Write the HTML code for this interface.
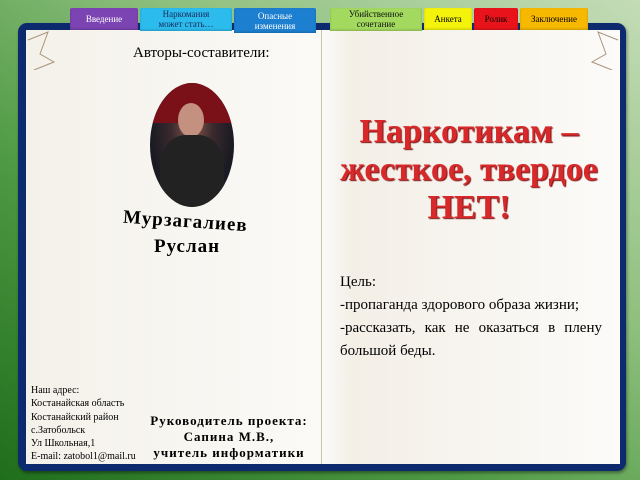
<!DOCTYPE html>
<html><head><meta charset="utf-8"><style>
body{margin:0;width:640px;height:480px;overflow:hidden;position:relative;font-family:"Liberation Serif",serif;
background:linear-gradient(35deg,#1f6e1c 0%,#4f9a44 35%,#8fc07f 65%,#c4dcb7 100%);}
.frame{position:absolute;left:18px;top:23px;width:608px;height:448px;background:#0e2a6e;border-radius:9px;box-shadow:1px 2px 3px rgba(0,0,0,.4)}
.page{position:absolute;left:26px;top:30px;width:594px;height:434px;background:linear-gradient(90deg,#f4f1ea,#fbfaf7 50%,#f3efe7 55%,#fcfbf9);}
.div{position:absolute;left:321px;top:30px;width:1px;height:434px;background:#cdbfae}
.tab{position:absolute;top:8px;height:22px;font-size:9px;text-align:center;line-height:10px;border-radius:2px 2px 0 0;overflow:hidden;box-shadow:inset 0 -1px 2px rgba(0,0,0,.2)}
.t{position:absolute;color:#000}
.bold{font-family:"Liberation Serif",serif;font-weight:bold}
</style></head><body>
<div class="frame"></div>
<div class="page"></div>
<div class="div"></div>
<div class="tab" style="left:70px;width:68px;background:#7b44b2;color:#fff;line-height:22px">Введение</div>
<div class="tab" style="left:140px;width:92px;background:#2bbbec;color:#1a2a5a;padding-top:1px">Наркомания<br>может стать…</div>
<div class="tab" style="left:234px;width:82px;background:#1d7fd0;color:#fff;padding-top:3px">Опасные<br>изменения</div>
<div class="tab" style="left:330px;width:92px;background:#a2d95e;color:#111;padding-top:1px">Убийственное<br>сочетание</div>
<div class="tab" style="left:424px;width:48px;background:#f3f30c;line-height:22px">Анкета</div>
<div class="tab" style="left:474px;width:44px;background:#e9141b;line-height:22px">Ролик</div>
<div class="tab" style="left:520px;width:68px;background:#f6b900;line-height:22px">Заключение</div>
<svg style="position:absolute;left:26px;top:30px" width="40" height="40"><path d="M2 10 L22 2 L14 24 L28 32 L8 40" fill="none" stroke="#a89478" stroke-width="1"/></svg>
<svg style="position:absolute;left:580px;top:30px" width="40" height="40"><path d="M38 10 L18 2 L26 24 L12 32 L32 40" fill="none" stroke="#a89478" stroke-width="1"/></svg>
<div class="t" style="left:133px;top:45px;font-size:15px">Авторы-составители:</div>
<div style="position:absolute;left:150px;top:83px;width:84px;height:124px;border-radius:50%;background:radial-gradient(ellipse at 50% 35%,#8a5a4a 0%,#3a2a2e 35%,#1a1a22 70%);overflow:hidden">
<div style="position:absolute;left:0;top:0;width:84px;height:40px;background:#7a1018"></div>
<div style="position:absolute;left:28px;top:20px;width:26px;height:34px;border-radius:50%;background:#c49080"></div>
<div style="position:absolute;left:10px;top:52px;width:64px;height:80px;border-radius:40% 40% 0 0;background:#222"></div>
</div>
<div class="t bold" style="left:123px;top:211px;font-size:19px;letter-spacing:1px;transform:rotate(4deg)">Мурзагалиев</div>
<div class="t bold" style="left:154px;top:236px;font-size:19px;letter-spacing:1px">Руслан</div>
<div class="t" style="left:31px;top:384px;font-size:10px;line-height:13.3px">Наш адрес:<br>Костанайская область<br>Костанайский район<br>с.Затобольск<br>Ул Школьная,1<br>E-mail: zatobol1@mail.ru</div>
<div class="t bold" style="left:136px;top:413px;width:186px;text-align:center;font-size:13px;line-height:16px;letter-spacing:1px">Руководитель проекта:<br>Сапина М.В.,<br>учитель информатики</div>
<div class="t" style="left:334px;top:113px;width:270px;text-align:center;font-size:34px;line-height:38px;font-weight:bold;color:#d8282a;text-shadow:1px 1px 1px #7a1010">Наркотикам –<br>жесткое, твердое<br>НЕТ!</div>
<div class="t" style="left:340px;top:271px;font-size:15px;line-height:23px;width:262px">Цель:<br>-пропаганда здорового образа жизни;<br><div style="text-align:justify">-рассказать, как не оказаться в плену большой беды.</div></div>
</body></html>
